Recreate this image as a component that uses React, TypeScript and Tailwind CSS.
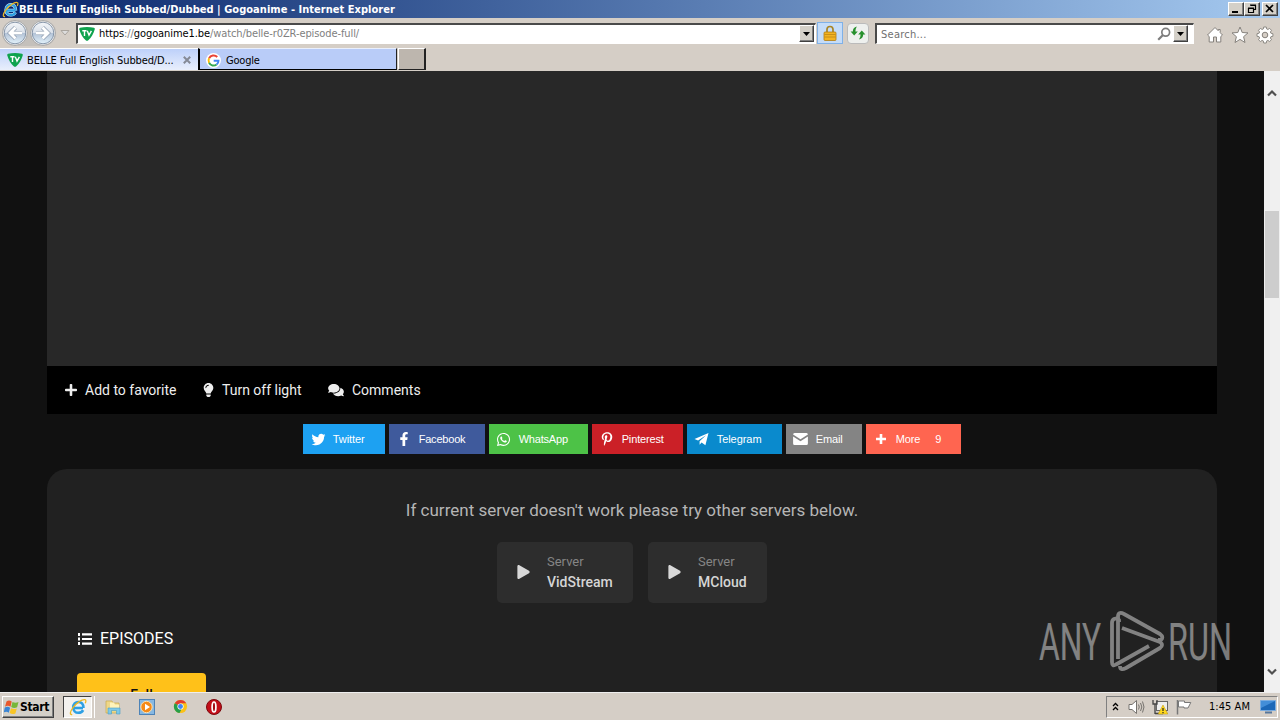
import React from "react";
import {
  FaPlus, FaLightbulb, FaComments, FaTwitter, FaFacebookF, FaWhatsapp,
  FaPinterestP, FaPlay,
} from "react-icons/fa";

const ui = "font-['DejaVu_Sans_Condensed','DejaVu_Sans',sans-serif]";
const raised = "border border-t-white border-l-white border-r-[#404040] border-b-[#404040] bg-[#d4d0c8] shadow-[inset_-1px_-1px_0_#808080]";

function IELogo({ className }: { className: string }) {
  return (
    <svg viewBox="0 0 18 18" className={className}>
      <path d="M14 10H5M14.500 10C14.500 5.800 12.300 3.900 9.400 3.900S4.200 6.200 4.200 9.400s2.200 5.400 5.200 5.400c2.300 0 3.900-1 4.700-2.700" fill="none" stroke="#d8f0fc" strokeWidth="3.400" />
      <path d="M14 10H5M14.500 10C14.500 5.800 12.300 3.900 9.400 3.900S4.200 6.200 4.200 9.400s2.200 5.400 5.200 5.400c2.300 0 3.900-1 4.700-2.700" fill="none" stroke="#2f9fe2" strokeWidth="2.500" />
      <path d="M3.200 16.300C.5 17.300.8 13.800 4 9.600 7.500 5 13 1 16 1.600c1.300.3 1 2 .2 3.600" fill="none" stroke="#eeb822" strokeWidth="1.300" />
    </svg>
  );
}

function TvLogo() {
  return (
    <svg viewBox="0 0 16 14" className="h-[14px] w-4 shrink-0">
      <path d="M1 .8Q8-.6 15 .8q1.200.4.7 1.800C14.400 7 12 11 9.300 13.200q-1.300 1-2.600 0C4 11 1.600 7 .3 2.600Q-.1 1.200 1 .8Z" fill="#0fa34e" />
      <path d="M3.300 3.800h4.200M5.500 3.800V9M8.300 3.800l1.700 4.400 2.400-4.400" fill="none" stroke="#fff" strokeWidth="1.400" />
    </svg>
  );
}

function GoogleG() {
  return (
    <svg viewBox="0 0 16 16" className="h-[15px] w-[15px] shrink-0">
      <circle cx="8" cy="8" r="8" fill="#fff" />
      <g fill="none" strokeWidth="2.100">
        <path d="M12 4.300A5.300 5.300 0 0 0 3.300 5.600" stroke="#ea4335" />
        <path d="M3.300 5.600a5.300 5.300 0 0 0 0 4.800" stroke="#fbbc05" />
        <path d="M3.300 10.400a5.300 5.300 0 0 0 8 1.900" stroke="#34a853" />
        <path d="M11.300 12.300A5 5 0 0 0 13.300 8.200H8.200" stroke="#4285f4" />
      </g>
    </svg>
  );
}

function NavCircle({ flip }: { flip?: boolean }) {
  return (
    <svg viewBox="0 0 26 26" className={flip ? "h-[26px] w-[26px] -scale-x-100" : "h-[26px] w-[26px]"}>
      <defs>
        <linearGradient id={flip ? "nf" : "nb"} x1="0" y1="0" x2="0" y2="1">
          <stop offset="0" stopColor="#f4f6f9" /><stop offset=".48" stopColor="#d9e0e9" />
          <stop offset=".52" stopColor="#b3c3d7" /><stop offset="1" stopColor="#e3f2fb" />
        </linearGradient>
      </defs>
      <circle cx="13" cy="13" r="12.400" fill="#f1f1f1" stroke="#a5a5a5" />
      <circle cx="13" cy="13" r="10.800" fill={flip ? "url(#nf)" : "url(#nb)"} stroke="#7c8ca2" strokeWidth=".9" />
      <path d="M13.500 7.500 8 13l5.500 5.500M8.500 13H20" fill="none" stroke="#8796aa" strokeWidth="4.200" />
      <path d="M13.500 7.500 8 13l5.500 5.500M8.500 13H20" fill="none" stroke="#fff" strokeWidth="2.900" />
    </svg>
  );
}

function DropButton() {
  return (
    <div className={`flex h-[17px] w-[15px] shrink-0 items-center justify-center ${raised}`}>
      <svg viewBox="0 0 7 4" className="h-1 w-[7px]"><path d="M0 0h7L3.500 4Z" fill="#000" /></svg>
    </div>
  );
}

function TitleBar() {
  return (
    <div className="flex h-[18px] shrink-0 items-center bg-linear-to-r from-[#0a246a] to-[#a6caf0] pl-[2px] pr-[2px]">
      <IELogo className="h-[17px] w-[17px]" />
      <span className={`${ui} whitespace-nowrap text-[11px] font-bold leading-none tracking-[0.03px] text-white`}>
        BELLE Full English Subbed/Dubbed | Gogoanime - Internet Explorer
      </span>
      <div className="ml-auto flex">
        <div className={`h-[14px] w-4 ${raised}`}><svg viewBox="0 0 14 12" className="h-3 w-[14px]"><path d="M3 8h6v2H3Z" /></svg></div>
        <div className={`h-[14px] w-4 ${raised}`}>
          <svg viewBox="0 0 14 12" className="h-3 w-[14px]"><path d="M5.500 2.500h5v4h-2M5 2h6M3.500 5.500h5v4h-5ZM3 5h6" fill="none" stroke="#000" strokeWidth="1.200" /></svg>
        </div>
        <div className={`ml-[2px] h-[14px] w-4 ${raised}`}><svg viewBox="0 0 14 12" className="h-3 w-[14px]"><path d="m3 2 7 7M10 2 3 9" stroke="#000" strokeWidth="1.700" /></svg></div>
      </div>
    </div>
  );
}

function NavBar() {
  return (
    <div className="flex h-[30px] shrink-0 items-center bg-[#d5cec6] pl-[2px]">
      <div className="flex gap-[2px] rounded-full bg-[#c4c0bb]"><NavCircle /><NavCircle flip /></div>
      <svg viewBox="0 0 10 6" className="ml-[4px] h-[6px] w-[10px]"><path d="M1 .5h8L5 5Z" fill="#ddd" stroke="#aaa59e" /></svg>
      <div className="ml-[6px] flex h-[21px] w-[740px] items-center border-b border-l-2 border-r border-t-2 border-b-white border-l-[#4a4a4a] border-r-white border-t-[#4a4a4a] bg-white pl-[1px] pr-[1px]">
        <TvLogo />
        <span className={`${ui} ml-[4px] grow whitespace-nowrap text-[11px] leading-none tracking-[-0.09px] text-[#808080]`}>
          <span className="text-black">https</span>://<span className="text-black">gogoanime1.be</span>/watch/belle-r0ZR-episode-full/
        </span>
        <DropButton />
      </div>
      <div className="ml-[1px] flex h-[22px] w-[26px] items-center justify-center border border-[#7fb1e8] bg-[#c5dcf8]">
        <svg viewBox="0 0 14 16" className="h-4 w-[14px]">
          <path d="M4 8V4.500a3 3 0 0 1 6 0V8" fill="none" stroke="#a88425" strokeWidth="1.700" />
          <rect x="1" y="7" width="12" height="8.500" rx="1" fill="#f3b322" stroke="#b07c13" strokeWidth=".8" />
          <path d="M1.500 9.500h11M1.500 12h11" stroke="#bd8714" strokeWidth=".8" />
        </svg>
      </div>
      <div className="ml-[4px] flex h-[21px] w-[22px] items-center justify-center rounded-sm border border-[#bbb] bg-[#eef0ee]">
        <svg viewBox="0 0 16 14" className="h-[14px] w-4">
          <path d="M6.800.5Q2.800 1.500 2.800 5.500H.6L4.200 9.500 7.800 5.500H5.400Q5.300 3 6.800.5ZM9 13.500q4.200-1 4.200-5h2.200L11.800 4.500 8.200 8.500h2.400Q10.700 11 9 13.500Z" fill="#27902d" />
        </svg>
      </div>
      <div className="ml-[6px] flex h-[21px] w-[319px] items-center border-b border-l-2 border-r border-t-2 border-b-white border-l-[#4a4a4a] border-r-white border-t-[#4a4a4a] bg-white pl-[4px] pr-[5px]">
        <span className={`${ui} grow pt-[1px] text-[11px] leading-none tracking-[0.25px] text-[#707070]`}>Search...</span>
        <svg viewBox="0 0 14 14" className="mr-[2px] h-[14px] w-[14px]"><circle cx="8.700" cy="5.300" r="3.900" fill="none" stroke="#7d7d7d" strokeWidth="1.700" /><path d="m6 8-4.800 4.800" stroke="#7d7d7d" strokeWidth="2.200" /></svg>
        <DropButton />
      </div>
      <div className="ml-[12px] flex items-center gap-[7px] pt-[3px]">
        <svg viewBox="0 0 18 18" className="h-[18px] w-[18px]"><path d="M9 1.500 1.500 9l1.700 1.500V16h4.300v-5h3v5h4.300v-5.500L16.500 9l-2.300-2.300V3.500h-2v1.200Z" fill="#fff" stroke="#85817c" /></svg>
        <svg viewBox="0 0 18 18" className="h-[18px] w-[18px]"><path d="m9 1 2.200 5.500 5.800.4-4.400 3.800 1.400 5.800L9 13.400 4 16.500l1.400-5.800L1 6.900l5.800-.4Z" fill="#fff" stroke="#85817c" /></svg>
        <svg viewBox="0 0 18 18" className="h-[18px] w-[18px]">
          <path d="M7.700 1h2.600l.4 2 1.200.5 1.700-1.100 1.900 1.900-1.100 1.700.5 1.200 2 .5v2.600l-2 .4-.5 1.300 1.100 1.700-1.900 1.800-1.700-1.100-1.200.5-.4 2.100H7.700l-.4-2.100-1.200-.5-1.700 1.100-1.900-1.800L3.600 12l-.5-1.300-2.100-.4V7.700l2.100-.5L3.600 6 2.500 4.300l1.900-1.900 1.700 1.100L7.300 3Z" fill="#fff" stroke="#85817c" strokeWidth=".9" />
          <circle cx="9" cy="9" r="2.800" fill="#d5cec6" stroke="#85817c" />
        </svg>
      </div>
    </div>
  );
}

function TabRow() {
  return (
    <div className="flex h-[23px] shrink-0 bg-[#d5cec6] pb-[1px]">
      <div className="flex h-[22px] w-[198px] items-center border-t border-white bg-linear-to-b from-[#bdd0fa] to-[#e9effc] pl-[7px] pr-[7px] pt-[1px]">
        <TvLogo />
        <span className={`${ui} ml-[4px] grow whitespace-nowrap text-[11px] leading-none tracking-[-0.12px] text-black`}>BELLE Full English Subbed/D...</span>
        <svg viewBox="0 0 8 8" className="h-2 w-2"><path d="m.8.8 6.400 6.400M7.200.8.8 7.200" stroke="#858a96" strokeWidth="2" /></svg>
      </div>
      <div className="flex h-[22px] w-[199px] items-center border-b border-l-2 border-r border-t border-b-black border-l-black border-r-[#222] border-t-[#e9effc] bg-[#b9ccf8] pl-[6px] pt-[2px]">
        <GoogleG />
        <span className={`${ui} ml-[5px] text-[11px] leading-none tracking-[-0.2px] text-black`}>Google</span>
      </div>
      <div className="ml-[1px] h-[22px] w-7 border-b border-l border-r-2 border-t border-b-[#222] border-l-white border-r-[#222] border-t-white bg-[#bdb6ae]" />
    </div>
  );
}

const shares = [
  { label: "Twitter", icon: <FaTwitter size={14} className="translate-x-[0.5px] translate-y-[0.5px]" />, box: "w-[82px] bg-[#1da1f2]", text: "tracking-[-0.05px]" },
  { label: "Facebook", icon: <FaFacebookF size={14} />, box: "w-[96px] bg-[#3f5a9c]", text: "tracking-[-0.2px]" },
  { label: "WhatsApp", icon: <FaWhatsapp size={15} />, box: "w-[99px] bg-[#4dc247]", text: "tracking-[-0.2px]" },
  { label: "Pinterest", icon: <FaPinterestP size={14} />, box: "w-[91px] bg-[#cb2027]", text: "tracking-[-0.15px]" },
  {
    label: "Telegram", box: "w-[95px] bg-[#0a8acd]", text: "tracking-[-0.05px]",
    icon: <svg viewBox="0 0 15 14" className="h-[14px] w-[15px]" fill="currentColor"><path d="M14.500 1 .5 7l3.600 1.500L12 3.300 5.600 9.200v3.600l2-2.300 3.800 2.700Z" /></svg>,
  },
  {
    label: "Email", box: "w-[76px] bg-[#848484]", text: "tracking-[-0.1px]",
    icon: <svg viewBox="0 0 15 12" className="h-3 w-[15px]" fill="currentColor"><path d="M1.500 0h12q1.400 0 1.400 1.500L7.500 6.300.1 1.500Q.1 0 1.500 0ZM.1 3.500l7.400 4.800 7.400-4.800v7q0 1.500-1.400 1.500h-12Q.1 12 .1 10.500Z" /></svg>,
  },
  {
    label: "More", count: "9", box: "w-[95px] bg-[#ff6550]", text: "tracking-[-0.1px]",
    icon: <svg viewBox="0 0 10 10" className="h-[10px] w-[10px]"><path d="M5 0v10M0 5h10" stroke="#fff" strokeWidth="2.600" /></svg>,
  },
];

function Server({ name, width }: { name: string; width: string }) {
  return (
    <div className={`flex h-[61px] items-center rounded-[5px] bg-[#2d2d2d] pl-5 ${width}`}>
      <FaPlay className="mt-[-1px] h-[14px] w-[13px] text-[#d8d8d8]" />
      <div className="ml-[17px] pb-[2px]">
        <div className="text-[13px] leading-5 text-[#858585]">Server</div>
        <div className="text-[14px] font-medium leading-5 text-[#d5d5d5]">{name}</div>
      </div>
    </div>
  );
}

function Page() {
  return (
    <div className="flex h-full w-[1264px] flex-col overflow-hidden bg-[#111] px-[47px] font-[Roboto,sans-serif]">
      <div className="h-[295px] shrink-0 bg-[#282828]" />
      <div className="flex h-12 shrink-0 items-center bg-black pl-[18px] pt-[1px] text-[14px] text-[#eee]">
        <FaPlus className="mb-[1px] h-[14px] w-3" /><span className="ml-2 w-[91px] whitespace-nowrap">Add to favorite</span>
        <FaLightbulb className="mb-[1px] ml-[27px] h-[14px] w-[11px]" /><span className="ml-2 w-20 whitespace-nowrap">Turn off light</span>
        <FaComments className="mb-[1px] ml-[26px] h-[14px] w-4" /><span className="ml-2">Comments</span>
      </div>
      <div className="mt-[10px] flex h-[30px] shrink-0 justify-center gap-1 font-['Liberation_Sans',sans-serif] text-[11px] text-white">
        {shares.map((s) => (
          <div key={s.label} className={`flex items-center pl-[7px] ${s.box}`}>
            <span className="flex w-[15px] justify-center">{s.icon}</span>
            <span className={`ml-[7.700px] whitespace-nowrap ${s.text}`}>{s.label}</span>
            {s.count && <span className="ml-[15px]">{s.count}</span>}
          </div>
        ))}
      </div>
      <div className="mt-[15px] h-[300px] shrink-0 rounded-[20px] bg-[#212121] px-[30px] pt-[31px]">
        <div className="text-center text-[17px] leading-5 text-[#b5b5b5]">If current server doesn't work please try other servers below.</div>
        <div className="mt-[22px] flex justify-center gap-[15px]">
          <Server name="VidStream" width="w-[136px]" />
          <Server name="MCloud" width="w-[119px]" />
        </div>
        <div className="mt-[26px] flex h-5 items-center text-[16px] text-white">
          <svg viewBox="0 0 15 12" className="h-3 w-[15px]" fill="currentColor">
            <path d="M1 0h2v3H1ZM1 4.500h2v3H1ZM1 9h2v3H1ZM5 .3h10v2.200H5ZM5 4.900h10v2.200H5ZM5 9.500h10v2.200H5Z" />
          </svg>
          <span className="ml-2">EPISODES</span>
        </div>
        <div className="mt-[24px] h-[38px] w-[129px] rounded bg-[#ffc119] pt-3 text-center text-[14px] font-medium leading-5 text-[#111]">Full</div>
      </div>
    </div>
  );
}

function Watermark() {
  return (
    <svg viewBox="0 0 210 70" className="absolute left-[1035px] top-[606px] h-[70px] w-[210px] opacity-50">
      <g fill="#e2e2e2" fontFamily="Roboto, sans-serif" fontSize="52">
        <text x="4" y="53.500" textLength="62" lengthAdjust="spacingAndGlyphs">ANY</text>
        <text x="133" y="53.500" textLength="64" lengthAdjust="spacingAndGlyphs">RUN</text>
      </g>
      <g fill="none" stroke="#e2e2e2" strokeWidth="3.800" strokeLinejoin="round">
        <path d="M84 16V14q-1-2.500-5-1-2 1-2 4v39q0 5 4 2.500L114 40" />
        <path d="M83 53V11q0-6 6-3l36 20q4 3 1 6h-3M87 22l38 14q4 3 0 6L91 62q-6 3-6-2" />
      </g>
    </svg>
  );
}

function ScrollBar() {
  return (
    <div className="flex w-4 flex-col items-center bg-[#f0f0f0]">
      <svg viewBox="0 0 10 8" className="mt-[18px] h-2 w-[10px] shrink-0"><path d="m1 6.500 4-4 4 4" fill="none" stroke="#505050" strokeWidth="2.200" /></svg>
      <div className="mt-[114px] h-[87px] w-[14px] shrink-0 bg-[#cdcdcd]" />
      <svg viewBox="0 0 10 8" className="mb-[16px] mt-auto h-2 w-[10px]"><path d="m1 1.500 4 4 4-4" fill="none" stroke="#505050" strokeWidth="2.200" /></svg>
    </div>
  );
}

function TaskBar() {
  return (
    <div className="flex h-7 shrink-0 items-center border-t border-[#eee] bg-[#d5cec6] pl-[2px] pr-[2px]">
      <div className={`flex h-[22px] w-[52px] items-center pl-[1px] ${raised}`}>
        <svg viewBox="0 0 15 15" className="h-[15px] w-[15px] shrink-0">
          <path d="M2.500 2.500q2.500-2 5.200 0L6.500 7.700Q3.800 6 1 7.700Z" fill="#e9582c" /><path d="M8.500 3q3 1.500 6 0l-1.400 5.300Q10 10 7.200 8Z" fill="#77b73b" />
          <path d="M.8 8.500q3-1.500 5.300.2l-1.300 5Q2.500 12-.3 13.500Z" fill="#3b85d4" /><path d="M7 9.200q3 1.500 5.800.2l-1.400 5q-3 1.300-5.700-.3Z" fill="#f8c526" />
        </svg>
        <span className={`${ui} ml-[1px] text-[12px] font-bold leading-none tracking-[-0.3px] text-black`}>Start</span>
      </div>
      <div className="ml-[9px] flex h-[22px] w-[29px] items-center justify-center border border-b-white border-l-[#404040] border-r-white border-t-[#404040] bg-[#f3f1ee]">
        <IELogo className="h-[18px] w-[18px]" />
      </div>
      <div className="ml-[1px] h-[22px] w-[2px] border-r border-white" />
      <svg viewBox="0 0 16 16" className="ml-[10px] h-4 w-4">
        <path d="M1 2h6l1 2h6v10H1Z" fill="#eed789" stroke="#c9a94b" strokeWidth=".7" /><path d="M5 3.500h4l1 2h4V9H5Z" fill="#fff3ba" />
        <path d="M3 9h12v6h-3.500v-3.500h-5V15H3Z" fill="#7ec8e8" stroke="#4a9fc4" strokeWidth=".6" />
      </svg>
      <svg viewBox="0 0 16 16" className="ml-[18px] h-4 w-4">
        <rect x=".5" y=".5" width="15" height="15" fill="#87b8e2" stroke="#4d83b7" /><circle cx="7.500" cy="8" r="5.700" fill="#f58a18" stroke="#ffe1ac" /><path d="m6 4.800 5 3.200-5 3.200Z" fill="#fff" />
      </svg>
      <svg viewBox="0 0 16 16" className="ml-[18px] h-[15px] w-[15px]">
        <circle cx="8" cy="8" r="7" fill="#fbc116" /><path d="M8 8 1.900 4.500A7 7 0 0 1 14.100 4.500H8Z" fill="#e33b2e" /><path d="M8 8 1.900 4.500A7 7 0 0 0 7 15L10 9Z" fill="#269e4b" /><circle cx="8" cy="8" r="3.300" fill="#fff" /><circle cx="8" cy="8" r="2.600" fill="#4285f4" />
      </svg>
      <svg viewBox="0 0 16 16" className="ml-[18px] h-4 w-4"><circle cx="8" cy="8" r="7.500" fill="#c30e18" stroke="#7d080e" /><ellipse cx="8" cy="8" rx="1.900" ry="5" fill="#a50c14" stroke="#fff" strokeWidth="1.700" /></svg>
      <div className={`${ui} ml-auto flex h-[22px] w-[172px] items-center border border-b-white border-l-[#808080] border-r-white border-t-[#808080] pl-[5px] text-[11px] text-black`}>
        <svg viewBox="0 0 7 9" className="h-[9px] w-[7px]"><path d="m1 4 2.500-2.500L6 4M1 8l2.500-2.500L6 8" fill="none" stroke="#000" strokeWidth="1.300" /></svg>
        <svg viewBox="0 0 17 16" className="ml-[9px] h-4 w-[17px]" fill="none" stroke="#75726e">
          <path d="M1 5.500h3L8.500 1.500v13L4 10.500H1Z" fill="#fff" /><path d="M10.500 5.500q1.500 2.500 0 5M12.500 4q2.700 4 0 8M14.500 2.500q3 5.500 0 11" />
        </svg>
        <svg viewBox="0 0 16 16" className="ml-[7px] h-4 w-4">
          <rect x="4.500" y="2.500" width="11" height="9" fill="#eee" stroke="#666" /><path d="M1 1v4h4V1M3 5v10M3 14.500h8" fill="none" stroke="#444" strokeWidth="1.300" /><path d="m11 6 4.800 9H6.200Z" fill="#ffd91f" stroke="#bd9500" strokeWidth=".5" /><path d="M11 9v3M11 13v1.200" stroke="#222" strokeWidth="1.200" />
        </svg>
        <svg viewBox="0 0 16 16" className="ml-[8px] h-4 w-4"><path d="M1.500 1v14.500" stroke="#777" strokeWidth="1.500" /><path d="M2.500 2h6v1.500h6.300L12 9H8V8H2.500Z" fill="#fff" stroke="#777" /></svg>
        <span className="ml-[17px] whitespace-nowrap leading-none tracking-[0.05px]">1:45 AM</span>
        <svg viewBox="0 0 16 14" className="ml-auto mr-[1px] h-[14px] w-4"><path d="M.5.5h15v10H.5Z" fill="#1c68b8" stroke="#7bacdf" /><path d="M1 1h14L1 8Z" fill="#438ed8" /><path d="M5 12.500h7" stroke="#56779c" strokeWidth="2" /></svg>
      </div>
    </div>
  );
}

export default function App() {
  return (
    <div className="relative flex h-[720px] w-[1280px] flex-col overflow-hidden bg-[#d5cec6]">
      <TitleBar />
      <NavBar />
      <TabRow />
      <div className="flex min-h-0 flex-1"><Page /><ScrollBar /></div>
      <TaskBar />
      <Watermark />
    </div>
  );
}
